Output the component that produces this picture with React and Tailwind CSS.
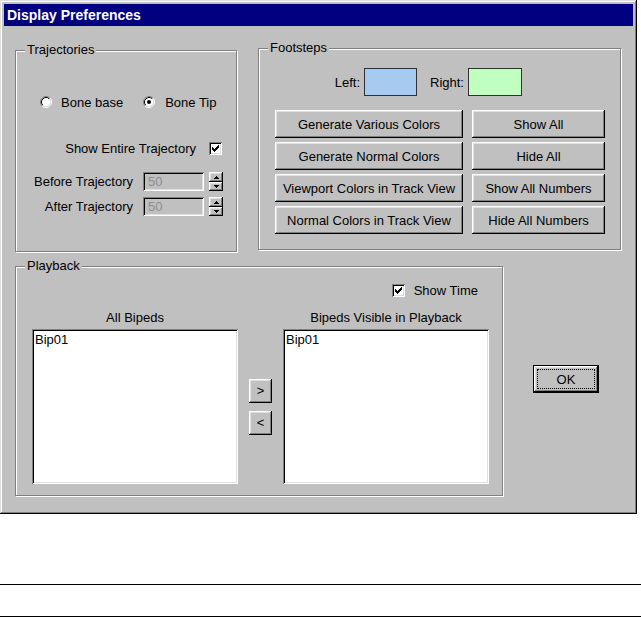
const raised = 'shadow-[inset_-1px_-1px_#000,inset_1px_1px_#fff,inset_-2px_-2px_#808080,inset_2px_2px_#dfdfdf]';
const sunken = 'shadow-[inset_1px_1px_#808080,inset_-1px_-1px_#fff,inset_2px_2px_#000,inset_-2px_-2px_#dfdfdf]';

// etched frame with a caption sitting on the top line
const Group = ({ label, className, children }) => (
  <div className={`relative shrink-0 border border-[#808080] shadow-[inset_1px_1px_#fff,1px_1px_#fff] ${className}`}>
    <span className="absolute -top-[9px] left-[9px] px-[2px] bg-[#c0c0c0] leading-[15px]">{label}</span>
    {children}
  </div>
);

const Radio = ({ checked }) => (
  <svg width="12" height="12" viewBox="0 0 12 12" className="shrink-0">
    <circle cx="6" cy="6" r="4.5" fill="#fff" />
    <path d="M2.11 9.89A5.5 5.5 0 0 1 9.89 2.11" stroke="#808080" fill="none" />
    <path d="M9.89 2.11A5.5 5.5 0 0 1 2.11 9.89" stroke="#fff" fill="none" />
    <path d="M2.82 9.18A4.5 4.5 0 0 1 9.18 2.82" stroke="#000" fill="none" />
    <path d="M9.18 2.82A4.5 4.5 0 0 1 2.82 9.18" stroke="#dfdfdf" fill="none" />
    {checked && <circle cx="6" cy="6" r="2" fill="#000" />}
  </svg>
);

const CheckBox = () => (
  <div className={`w-[13px] h-[13px] shrink-0 bg-white ${sunken} flex items-center justify-center`}>
    <svg width="7" height="7" viewBox="0 0 7 7">
      <rect x="6" y="0" width="1" height="1" />
      <rect x="5" y="1" width="2" height="1" />
      <rect x="0" y="2" width="1" height="1" />
      <rect x="4" y="2" width="3" height="1" />
      <rect x="0" y="3" width="2" height="1" />
      <rect x="3" y="3" width="3" height="1" />
      <rect x="0" y="4" width="5" height="1" />
      <rect x="1" y="5" width="3" height="1" />
      <rect x="2" y="6" width="1" height="1" />
    </svg>
  </div>
);

const Spinner = () => (
  <div className="flex flex-col w-[14px] h-[19px] shrink-0">
    <div className={`h-[10px] ${raised} flex items-center justify-center`}>
      <svg width="5" height="3" viewBox="0 0 5 3">
        <rect x="2" y="0" width="1" height="1" />
        <rect x="1" y="1" width="3" height="1" />
        <rect x="0" y="2" width="5" height="1" />
      </svg>
    </div>
    <div className={`h-[9px] ${raised} flex items-center justify-center`}>
      <svg width="5" height="3" viewBox="0 0 5 3">
        <rect x="0" y="0" width="5" height="1" />
        <rect x="1" y="1" width="3" height="1" />
        <rect x="2" y="2" width="1" height="1" />
      </svg>
    </div>
  </div>
);

const SpinRow = ({ label, className }) => (
  <div className={`flex items-center justify-end h-[19px] pr-[13px] ${className}`}>
    <span>{label}</span>
    <div className={`ml-[10px] w-[61px] h-[19px] ${sunken} pl-[5px] leading-[19px] text-[#8e8e8e]`}>50</div>
    <div className="ml-[5px]"><Spinner /></div>
  </div>
);

const Btn = ({ children, className = '' }) => (
  <div className={`flex items-center justify-center bg-[#c0c0c0] ${raised} ${className}`}>{children}</div>
);

const footstepButtons = [
  'Generate Various Colors', 'Show All',
  'Generate Normal Colors', 'Hide All',
  'Viewport Colors in Track View', 'Show All Numbers',
  'Normal Colors in Track View', 'Hide All Numbers',
];

const ListBox = () => (
  <div className={`w-[206px] h-[155px] mt-[4px] bg-white ${sunken} pt-[3px] pl-[3px] leading-[15px]`}>Bip01</div>
);

export default function App() {
  return (
    <div className="w-[641px] h-[617px] bg-white text-black text-[13px] leading-[15px] font-['Liberation_Sans',Arial,sans-serif]">
      <div className="w-[637px] h-[514px] bg-[#c0c0c0] p-[4px] shadow-[inset_-1px_-1px_#000,inset_1px_1px_#dfdfdf,inset_-2px_-2px_#808080,inset_2px_2px_#fff]">
        <div className="h-[22px] bg-[#000080] text-white font-bold text-[14px] flex items-center pl-[3px]">
          Display Preferences
        </div>

        <div className="flex items-start pl-[11px] mt-[22px]">
          <Group label="Trajectories" className="w-[222px] h-[202px] mt-[2px]">
            <div className="flex items-center h-[16px] mt-[43px] pl-[24px]">
              <Radio />
              <span className="ml-[9px]">Bone base</span>
              <div className="ml-[20px]"><Radio checked /></div>
              <span className="ml-[10px]">Bone Tip</span>
            </div>
            <div className="flex items-center justify-end h-[15px] mt-[31px] pr-[14px]">
              <span>Show Entire Trajectory</span>
              <div className="ml-[13px]"><CheckBox /></div>
            </div>
            <SpinRow label="Before Trajectory" className="mt-[16px]" />
            <SpinRow label="After Trajectory" className="mt-[6px]" />
          </Group>

          <Group label="Footsteps" className="w-[363px] h-[202px] ml-[21px]">
            <div className="flex items-center h-[28px] mt-[19px]">
              <span className="w-[101px] text-right">Left:</span>
              <div className="ml-[4px] w-[53px] h-[28px] bg-[#a6caf0] border border-[#303030]" />
              <span className="ml-[13px]">Right:</span>
              <div className="ml-[4px] w-[54px] h-[28px] bg-[#c0ffc0] border border-[#303030]" />
            </div>
            <div className="grid grid-cols-[188px_133px] gap-x-[9px] gap-y-[4px] mt-[14px] pl-[16px]">
              {footstepButtons.map((t) => (
                <Btn key={t} className="h-[28px]">{t}</Btn>
              ))}
            </div>
          </Group>
        </div>

        <div className="flex items-start pl-[11px] mt-[14px]">
          <Group label="Playback" className="w-[488px] h-[230px]">
            <div className="flex items-center justify-end h-[15px] mt-[16px] pr-[24px]">
              <CheckBox />
              <span className="ml-[9px]">Show Time</span>
            </div>
            <div className="flex mt-[12px] pl-[16px]">
              <div className="flex flex-col">
                <div className="text-center h-[15px]">All Bipeds</div>
                <ListBox />
              </div>
              <div className="w-[45px] pt-[19px] flex flex-col items-center justify-center gap-[8px] h-[174px]">
                <Btn className="w-[23px] h-[24px]">&gt;</Btn>
                <Btn className="w-[23px] h-[24px]">&lt;</Btn>
              </div>
              <div className="flex flex-col">
                <div className="text-center h-[15px]">Bipeds Visible in Playback</div>
                <ListBox />
              </div>
            </div>
          </Group>

          <div className="ml-[30px] mt-[99px] w-[66px] h-[28px] border border-black">
            <div className={`w-full h-full ${raised} p-[3px]`}>
              <div className="w-full h-full border border-dotted border-black flex items-center justify-center">OK</div>
            </div>
          </div>
        </div>
      </div>

      <div className="mt-[70px] h-px bg-black" />
      <div className="mt-[31px] h-px bg-black" />
    </div>
  );
}
